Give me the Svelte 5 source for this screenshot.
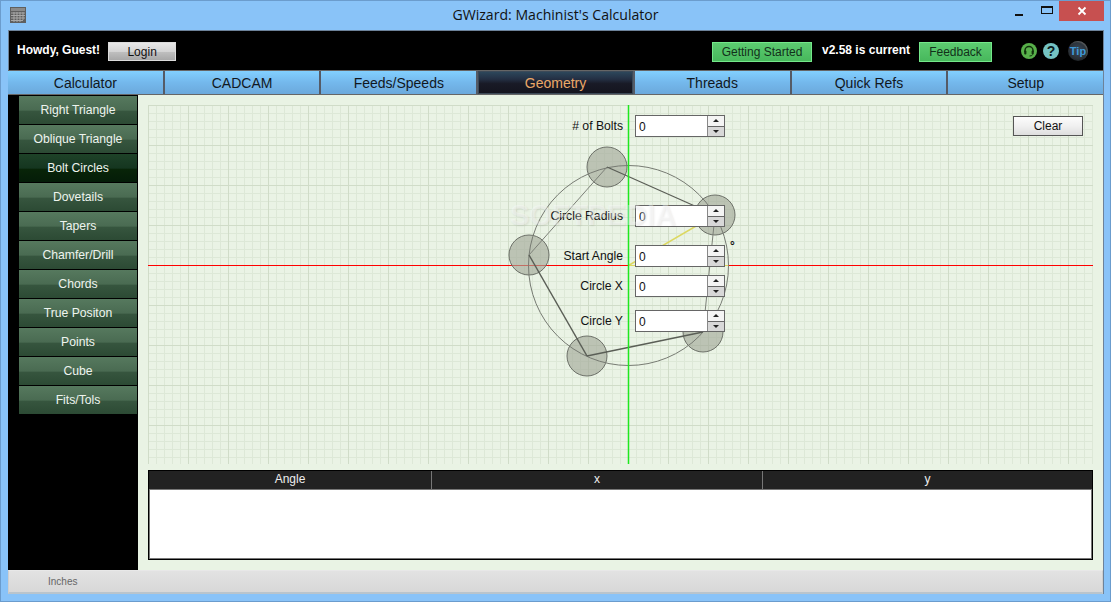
<script>
  const tabs = ['Calculator', 'CADCAM', 'Feeds/Speeds', 'Geometry', 'Threads', 'Quick Refs', 'Setup'];
  const tools = ['Right Triangle', 'Oblique Triangle', 'Bolt Circles', 'Dovetails', 'Tapers', 'Chamfer/Drill', 'Chords', 'True Positon', 'Points', 'Cube', 'Fits/Tols'];
  const fields = [
    { label: '# of Bolts', top: 10 },
    { label: 'Circle Radius', top: 100 },
    { label: 'Start Angle', top: 140 },
    { label: 'Circle X', top: 170 },
    { label: 'Circle Y', top: 205 }
  ];
  // bolt centres, relative to the canvas
  const bolts = [[459, 62], [567, 110], [555, 227], [439, 251], [381, 150]];
  // the segments do not all come out the same weight in the original
  const weights = [
    { w: 1.3, c: '#5a5e56' },
    { w: 1, c: '#7c8078' },
    { w: 1.3, c: '#5a5e56' },
    { w: 1.5, c: '#5a5e56' },
    { w: 1, c: '#7c8078' }
  ];
  const segments = bolts.map((b, i) => ({ a: b, b: bolts[(i + 1) % bolts.length], ...weights[i] }));
</script>

<div class="window">
  <header class="titlebar">
    <svg class="appicon" width="16" height="16" viewBox="0 0 16 16">
      <rect width="16" height="16" fill="#5f5f5f" />
      <rect x="1" y="1" width="14" height="3" fill="#8a8a8a" />
      <path d="M1 6h14M1 8.500h14M1 11h14M1 13.500h12M4 5v10M7 5v10M10 5v10M13 5v8" stroke="#a8a8a8" stroke-width="1" fill="none" />
    </svg>
    <div class="title">GWizard: Machinist's Calculator</div>
    <div class="controls">
      <span class="ctl"><span class="min"></span></span>
      <span class="ctl"><span class="max"></span></span>
      <span class="close">
        <svg width="10" height="10" viewBox="0 0 10 10"><path d="M1.500 1.500l7 7M8.500 1.500l-7 7" stroke="#fff" stroke-width="1.800" /></svg>
      </span>
    </div>
  </header>

  <div class="frame">
    <div class="topbar">
      <span class="howdy">Howdy, Guest!</span>
      <button class="login">Login</button>
      <span class="spacer"></span>
      <button class="green started">Getting Started</button>
      <span class="version">v2.58 is current</span>
      <button class="green feedback">Feedback</button>
      <svg class="support" width="16" height="16" viewBox="0 0 16 16">
        <circle cx="8" cy="8" r="8" fill="#58b04a" />
        <path d="M4 9V7.500a4 4 0 0 1 8 0V9" fill="none" stroke="#10300c" stroke-width="1.500" />
        <rect x="3.200" y="7.500" width="2.200" height="4" rx="1" fill="#10300c" />
        <rect x="10.600" y="7.500" width="2.200" height="4" rx="1" fill="#10300c" />
        <path d="M11.500 11.500q0 1.500-3 1.500" fill="none" stroke="#10300c" />
      </svg>
      <span class="help">?</span>
      <span class="tip">Tip</span>
    </div>

    <nav class="tabs">
      {#each tabs as tab}
        <div class="tab" class:active={tab === 'Geometry'}>{tab}</div>
      {/each}
    </nav>

    <div class="body">
      <aside class="sidebar">
        {#each tools as tool}
          <div class="tool" class:current={tool === 'Bolt Circles'}>{tool}</div>
        {/each}
      </aside>

      <main class="content">
        <div class="canvas">
          <svg class="drawing" width="945" height="359" viewBox="0 0 945 359">
            <line x1="0" y1="160.500" x2="945" y2="160.500" stroke="#ff0000" />
            <line x1="480.500" y1="160.500" x2="580.500" y2="160.500" stroke="#dcd860" />
            <line x1="480.500" y1="160.500" x2="567" y2="110" stroke="#dcd860" stroke-width="1.500" />
            {#each bolts as b}
              <circle cx={b[0]} cy={b[1]} r="20" fill="#a3a99a" fill-opacity="0.65" stroke="#6c7068" />
            {/each}
            <circle cx="480.500" cy="160.500" r="100" fill="none" stroke="#777b73" />
            {#each segments as s}
              <line x1={s.a[0]} y1={s.a[1]} x2={s.b[0]} y2={s.b[1]} stroke={s.c} stroke-width={s.w} />
            {/each}
            <line x1="480.500" y1="0" x2="480.500" y2="359" stroke="#1ee81e" stroke-width="1.500" />
          </svg>

          {#each fields as f}
            <div class="field" style="top: {f.top}px">
              <label for={f.label}>{f.label}</label>
              <div class="spin">
                <input id={f.label} value="0" />
                <div class="arrows">
                  <span class="up"></span>
                  <span class="down"></span>
                </div>
              </div>
            </div>
          {/each}
          <span class="degree">°</span>
          <button class="clear">Clear</button>
          <div class="watermark">SOFTPEDIA</div>
        </div>

        <div class="table">
          <div class="thead">
            <span class="th first">Angle</span>
            <span class="th second">x</span>
            <span class="th third">y</span>
          </div>
          <div class="tbody"></div>
        </div>
      </main>
    </div>

    <footer class="status">Inches</footer>
  </div>
</div>

<style>
  :global(body) {
    margin: 0;
    padding: 0;
    font-family: "Liberation Sans", Arial, sans-serif;
  }

  .window {
    width: 1111px;
    height: 602px;
    box-sizing: border-box;
    background: #89c3f8;
    border: 1px solid #6b9ccd;
    display: flex;
    flex-direction: column;
    overflow: hidden;
  }

  .titlebar {
    height: 29px;
    flex: none;
    display: flex;
    align-items: flex-start;
    position: relative;
  }

  .appicon {
    margin: 6px 0 0 9px;
  }

  .title {
    position: absolute;
    left: 0;
    right: 0;
    top: 5px;
    text-align: center;
    font-family: "Open Sans", sans-serif;
    font-size: 14.100px;
    line-height: 18px;
    color: #111;
  }

  .controls {
    margin-left: auto;
    margin-right: 6px;
    display: flex;
    position: relative;
  }

  .ctl {
    width: 27px;
    height: 20px;
    display: flex;
    align-items: center;
    justify-content: center;
  }

  .min {
    width: 8px;
    height: 2px;
    background: #111;
    margin-top: 8px;
  }

  .max {
    width: 10px;
    height: 5px;
    border: 1px solid #111;
    border-top-width: 2px;
    margin: -2px 0 0 3px;
  }

  .close {
    width: 45px;
    height: 20px;
    background: #c75050;
    display: flex;
    align-items: center;
    justify-content: center;
  }

  .frame {
    margin: 0 6px 7px 7px;
    flex: 1;
    min-height: 0;
    display: flex;
    flex-direction: column;
    background: #e9f3e4;
    border-top: 1px solid #6d8299;
    border-right: 1px solid #6d8299;
  }

  .topbar {
    height: 39px;
    flex: none;
    background: #000;
    display: flex;
    align-items: center;
    padding: 0 15px 0 10px;
    border-left: 1px solid #6d8299;
    box-sizing: border-box;
  }

  .howdy {
    color: #fff;
    font-size: 12px;
    font-weight: bold;
    margin: -2px 8px 0 -2px;
  }

  .login {
    width: 68px;
    height: 19px;
    padding: 0;
    border: 1px solid #dcdcdc;
    background: linear-gradient(#e8e8e8 0%, #d4d4d4 50%, #c0c0c0 51%, #a8a8a8 100%);
    color: #111;
    font: 12px "Liberation Sans", sans-serif;
    margin-top: 2px;
  }

  .spacer {
    flex: 1;
  }

  .green {
    height: 20px;
    padding: 0;
    border: 1px solid #74e88a;
    background: linear-gradient(#5ccb70 0%, #47b85c 100%);
    color: #12301a;
    font: 12px "Liberation Sans", sans-serif;
    margin-top: 2px;
  }

  .started {
    width: 100px;
  }

  .feedback {
    width: 73px;
    margin-right: 29px;
  }

  .version {
    color: #fff;
    font-size: 12px;
    font-weight: bold;
    margin: -2px 8px 0 10px;
    width: 89px;
    white-space: nowrap;
  }

  .support {
    flex: none;
    margin: 1px 6px 0 0;
  }

  .help {
    width: 16px;
    height: 16px;
    border-radius: 50%;
    background: #74c3c3;
    color: #0b1c1c;
    font-size: 14px;
    font-weight: bold;
    line-height: 16px;
    text-align: center;
    margin: 1px 9px 0 0;
  }

  .tip {
    width: 20px;
    height: 20px;
    border-radius: 50%;
    margin-top: 1px;
    background: radial-gradient(circle at 50% 45%, #39485a 0%, #2a3036 60%, #0c0c0c 100%);
    box-shadow: inset -1px 1px 1px #55585a;
    color: #3f9ad8;
    font-size: 11px;
    font-weight: bold;
    line-height: 20px;
    text-align: center;
  }

  .tabs {
    height: 25px;
    flex: none;
    display: flex;
    background: #666;
    border-top: 1px solid #666;
    border-bottom: 1px solid #666;
    box-sizing: border-box;
  }

  .tab {
    flex: 1;
    border-left: 1px solid #555b66;
    border-right: 1px solid #555b66;
    background: linear-gradient(#82d0ff 0%, #74b8ec 50%, #6ba9dc 100%);
    color: #11181e;
    font-size: 14px;
    line-height: 25px;
    text-align: center;
  }

  .tab:first-child {
    border-left: none;
  }

  .tab:last-child {
    border-right: none;
  }

  .tab.active {
    background: linear-gradient(#2e4a5e 0%, #243044 35%, #191a26 55%, #14141e 100%);
    color: #eba868;
    box-shadow: inset 0 0 0 1px #3c4a58;
  }

  .body {
    flex: 1;
    min-height: 0;
    display: flex;
  }

  .sidebar {
    width: 130px;
    flex: none;
    background: #000;
    padding: 1px 0 0 11px;
    box-sizing: border-box;
    display: flex;
    flex-direction: column;
    gap: 1px;
  }

  .tool {
    width: 118px;
    height: 28px;
    background: linear-gradient(#56795e 0%, #4a6b52 50%, #36553e 55%, #2c4a34 100%);
    color: #eef4ee;
    font-size: 12.200px;
    line-height: 28px;
    text-align: center;
  }

  .tool.current {
    background: linear-gradient(#1e4228 0%, #153620 50%, #082408 55%, #041c08 100%);
  }

  .content {
    flex: 1;
    min-width: 0;
    padding: 10px;
    display: flex;
    flex-direction: column;
    gap: 6px;
  }

  .canvas {
    position: relative;
    width: 945px;
    height: 359px;
    flex: none;
    background-color: #eaf3e5;
    background-image:
      linear-gradient(90deg, #d0dcc8 1px, transparent 1px),
      linear-gradient(#d0dcc8 1px, transparent 1px),
      linear-gradient(90deg, #dde8d7 1px, transparent 1px),
      linear-gradient(#dde8d7 1px, transparent 1px);
    background-size: 40px 40px, 40px 40px, 8px 8px, 8px 8px;
  }

  .drawing {
    display: block;
  }

  .watermark {
    position: absolute;
    left: 362px;
    top: 94px;
    color: rgba(255, 255, 255, 0.38);
    text-shadow: 1px 1px 2px rgba(0, 0, 0, 0.08);
    font-size: 29px;
    font-weight: bold;
    pointer-events: none;
  }

  .field {
    position: absolute;
    left: 360px;
    display: flex;
    align-items: center;
    gap: 12px;
  }

  .field label {
    width: 115px;
    text-align: right;
    font-size: 12.200px;
    color: #111;
  }

  .spin {
    width: 90px;
    height: 22px;
    box-sizing: border-box;
    border: 1px solid #666;
    background: #fff;
    display: flex;
  }

  .spin input {
    width: 71px;
    border: none;
    padding: 1px 0 0 3px;
    margin: 0;
    box-sizing: border-box;
    background: transparent;
    font: 12px "Liberation Sans", sans-serif;
    color: #111;
    outline: none;
  }

  .arrows {
    flex: 1;
    border-left: 1px solid #888;
    display: flex;
    flex-direction: column;
  }

  .up,
  .down {
    flex: 1;
    display: flex;
    align-items: center;
    justify-content: center;
  }

  .up {
    background: #f4f4f4;
    border-bottom: 1px solid #666;
  }

  .down {
    background: #d8d8d8;
  }

  .up::before {
    content: '';
    border: 3.500px solid transparent;
    border-top: none;
    border-bottom: 3.500px solid #222;
  }

  .down::before {
    content: '';
    border: 3.500px solid transparent;
    border-bottom: none;
    border-top: 3.500px solid #222;
  }

  .degree {
    position: absolute;
    left: 582px;
    top: 134px;
    font-size: 12px;
    font-weight: bold;
    color: #111;
  }

  .clear {
    position: absolute;
    right: 10px;
    top: 11px;
    width: 70px;
    height: 20px;
    padding: 0;
    border: 1px solid #555;
    background: linear-gradient(#fcfcfc 0%, #f0f0f0 50%, #dedede 100%);
    color: #111;
    font: 12px "Liberation Sans", sans-serif;
  }

  .table {
    height: 90px;
    flex: none;
    box-sizing: border-box;
    border: 1px solid #000;
    display: flex;
    flex-direction: column;
    background: #222;
  }

  .thead {
    height: 18px;
    flex: none;
    display: flex;
    color: #eee;
    font-size: 12px;
    line-height: 16px;
    text-align: center;
  }

  .th {
    box-sizing: border-box;
  }

  .first {
    width: 283px;
    border-right: 1px solid #777;
  }

  .second {
    width: 331px;
    border-right: 1px solid #777;
  }

  .third {
    flex: 1;
  }

  .tbody {
    flex: 1;
    background: #fff;
    border: 1px solid #777;
  }

  .status {
    height: 24px;
    flex: none;
    box-sizing: border-box;
    background: linear-gradient(#e2e2e2, #d8d8d8);
    border: 1px solid #cfcfcf;
    border-top: 1px solid #e8e8e8;
    border-bottom: 2px solid #b9c4cc;
    padding-left: 39px;
    font-size: 10px;
    line-height: 21px;
    color: #666;
  }
</style>
